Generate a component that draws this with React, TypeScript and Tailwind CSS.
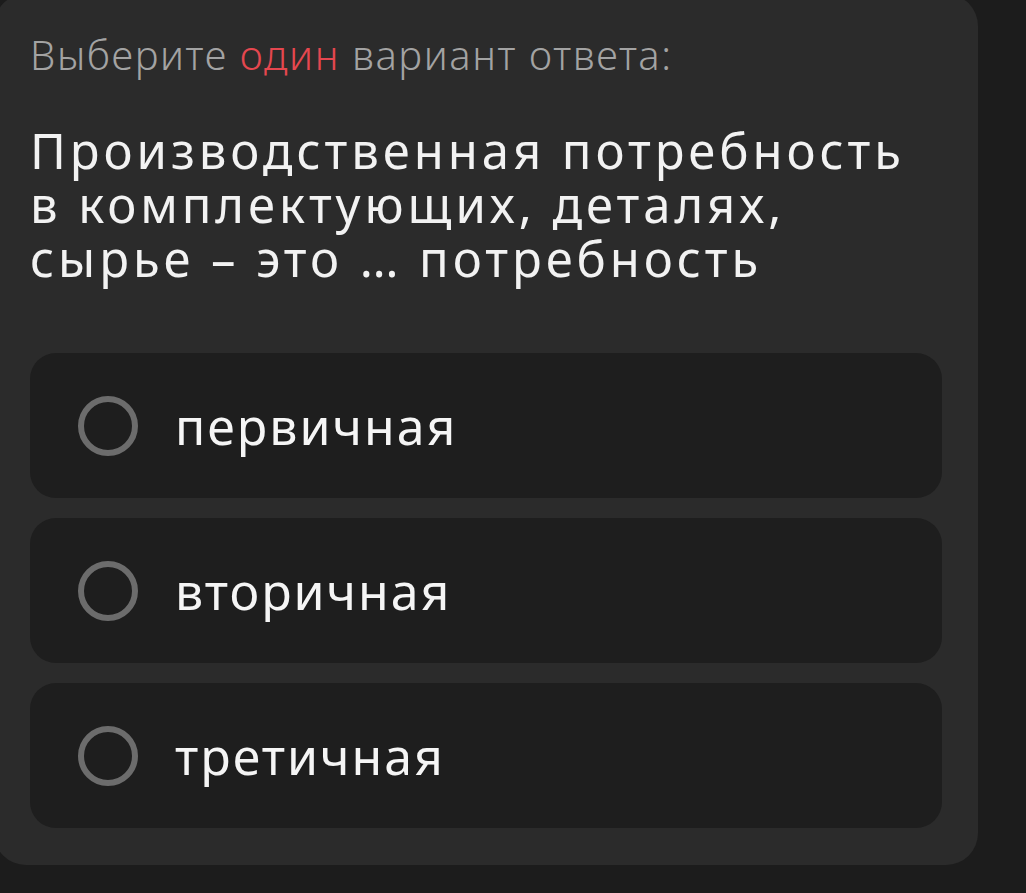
const options = ["первичная", "вторичная", "третичная"];

const Option = ({ label }: { label: string }) => {
  return (
    <div className="flex h-[145px] items-center gap-[37px] rounded-[26px] bg-[#1e1e1e] pl-12">
      <span className="h-[60px] w-[60px] shrink-0 rounded-full border-[6px] border-[#6c6c6c]" />
      <span className="text-[50px] leading-none tracking-[0.04em] text-[#f5f5f5]">{label}</span>
    </div>
  );
};

export default function App() {
  return (
    <div
      className="h-[893px] w-full overflow-hidden bg-[#1c1c1c]"
      style={{ fontFamily: '"Noto Sans", "Open Sans", sans-serif' }}
    >
      <div className="-ml-1.5 -mt-1.5 flex h-[871px] w-[984px] flex-col rounded-[32px] bg-[#2b2b2b] px-9 pt-[37px]">
        <p className="text-[40px] font-light leading-[48px] tracking-[0.04em] text-[#a3a3a3]">
          Выберите <span className="text-[#e5474f]">один</span> вариант ответа:
        </p>
        <h1 className="mt-[44px] flex flex-col text-[49px] tracking-[0.08em] text-[#f2f2f2]">
          <span className="h-[54px] leading-[54px]">Производственная потребность</span>
          <span className="h-[54px] leading-[54px]">в комплектующих, деталях,</span>
          <span className="h-[54px] leading-[54px]">сырье – это … потребность</span>
        </h1>
        <div className="mt-auto mb-[37px] flex flex-col gap-5">
          {options.map((o) => (
            <Option key={o} label={o} />
          ))}
        </div>
      </div>
    </div>
  );
}
